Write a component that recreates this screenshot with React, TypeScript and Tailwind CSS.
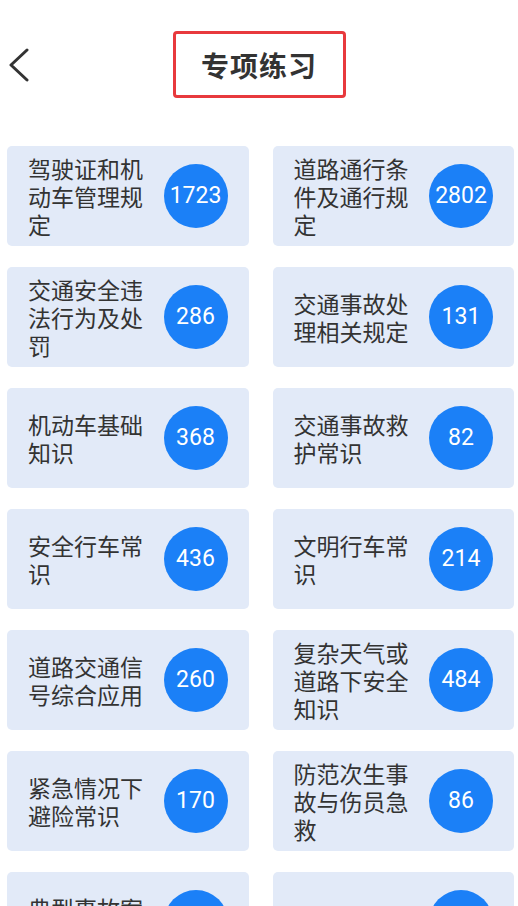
import React from 'react';

const items: { title: string; count: number }[] = [
  { title: '驾驶证和机动车管理规定', count: 1723 },
  { title: '道路通行条件及通行规定', count: 2802 },
  { title: '交通安全违法行为及处罚', count: 286 },
  { title: '交通事故处理相关规定', count: 131 },
  { title: '机动车基础知识', count: 368 },
  { title: '交通事故救护常识', count: 82 },
  { title: '安全行车常识', count: 436 },
  { title: '文明行车常识', count: 214 },
  { title: '道路交通信号综合应用', count: 260 },
  { title: '复杂天气或道路下安全知识', count: 484 },
  { title: '紧急情况下避险常识', count: 170 },
  { title: '防范次生事故与伤员急救', count: 86 },
  { title: '典型事故案例分析', count: 120 },
  { title: '地方题', count: 95 },
];

function Card({ title, count }: { title: string; count: number }) {
  return (
    <div className="flex h-[100px] items-center justify-between rounded-[5px] bg-[#e2eaf8] pl-[21px] pr-[21px]">
      <p className="w-[118px] text-[23px] leading-[28px] text-[#333333] font-['Noto_Sans_CJK_SC',sans-serif]">
        {title}
      </p>
      <div className="flex h-[64px] w-[64px] shrink-0 items-center justify-center rounded-full bg-[#1b80f7] text-[23px] text-white font-['Roboto','Noto_Sans_CJK_SC',sans-serif]">
        {count}
      </div>
    </div>
  );
}

export default function App() {
  return (
    <div className="min-h-screen overflow-hidden bg-white">
      {/* Header */}
      <div className="grid grid-cols-[1fr_auto_1fr] items-center pt-[31px]">
        <button className="flex items-center pl-[8px] text-[#333333]">
          <svg width="22" height="34" viewBox="0 0 22 34" fill="none">
            <path d="M19 2 L3 17 L19 32" stroke="currentColor" strokeWidth="3" strokeLinecap="round" strokeLinejoin="round" />
          </svg>
        </button>
        <div className="flex h-[67px] w-[173px] items-center justify-center rounded-[4px] border-[3px] border-[#e8393d]">
          <h1 className="text-[28px] font-bold tracking-[1px] text-[#333333] font-['Noto_Sans_CJK_SC',sans-serif]">
            专项练习
          </h1>
        </div>
        <div />
      </div>

      {/* Grid */}
      <div className="mt-[48px] grid grid-cols-2 gap-x-[24px] gap-y-[21px] pl-[7px] pr-[4px] pb-6">
        {items.map((it) => (
          <Card key={it.title} title={it.title} count={it.count} />
        ))}
      </div>
    </div>
  );
}
